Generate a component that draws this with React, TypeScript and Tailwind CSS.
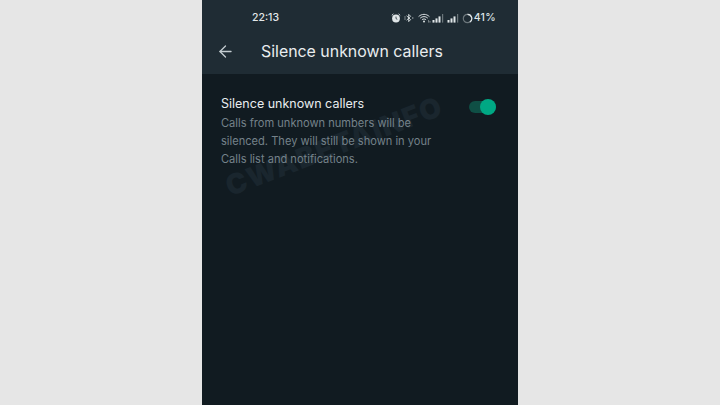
import { ArrowLeft } from "lucide-react";

function SignalBars({ className }: { className: string }) {
  return (
    <svg width="13" height="10" viewBox="0 0 13 10" className={className}>
      <rect x="0.5" y="7" width="2" height="2.6" fill="currentColor" />
      <rect x="3.5" y="5.4" width="2" height="4.2" fill="currentColor" />
      <rect x="6.5" y="3.4" width="2" height="6.2" fill="currentColor" />
      <rect x="10" y="1" width="1.2" height="8.6" fill="currentColor" opacity="0.4" />
    </svg>
  );
}

function StatusIcons() {
  return (
    <div className="flex items-center text-[#dfe5e7]">
      <svg width="10" height="10" viewBox="0 0 10 10" className="mr-[3px]">
        <circle cx="5" cy="5.5" r="3.9" fill="currentColor" />
        <path d="M5 3.6V5.6L6.3 6.3" stroke="#1f2c34" strokeWidth="0.8" fill="none" />
        <path d="M0.8 2.4L2.4 0.9M9.2 2.4L7.6 0.9" stroke="currentColor" strokeWidth="1" />
      </svg>
      <svg width="10" height="10" viewBox="0 0 10 10" className="mr-[4px]">
        <path d="M2.6 2.8L6.6 6.6L4.7 8.6V1.4L6.6 3.3L2.6 7.2" stroke="currentColor" strokeWidth="0.9" fill="none" />
        <path d="M0.4 4H1.6M0.4 6H1.6M8 5H9.4" stroke="currentColor" strokeWidth="0.8" />
      </svg>
      <svg width="13" height="10" viewBox="0 0 13 10">
        <path d="M0.6 3.6C3.6 0.6 8.4 0.6 11.4 3.6M2.2 5.2C4.4 3.1 7.6 3.1 9.8 5.2M3.9 6.8C5.1 5.7 6.9 5.7 8.1 6.8" stroke="currentColor" strokeWidth="0.95" fill="none" />
        <circle cx="6" cy="8.4" r="1" fill="currentColor" />
        <path d="M10.6 7V9.6M12 8V9.6" stroke="currentColor" strokeWidth="0.7" opacity="0.7" />
      </svg>
      <SignalBars className="ml-[1px]" />
      <SignalBars className="ml-[2px]" />
      <svg width="11" height="11" viewBox="0 0 11 11" className="ml-[2px]">
        <circle cx="5.5" cy="5.5" r="4.2" stroke="currentColor" strokeOpacity="0.4" strokeWidth="1.2" fill="none" />
        <path d="M5.5 1.3A4.2 4.2 0 0 1 7.9 9" stroke="currentColor" strokeWidth="1.2" fill="none" />
      </svg>
      <span className="ml-[1px] text-[10.5px] font-medium leading-none tracking-[0.3px]">41%</span>
    </div>
  );
}

export default function App() {
  return (
    <div className="flex h-[405px] w-[720px] justify-center overflow-hidden bg-[#e6e6e6] font-['Inter',sans-serif]">
      <div className="flex w-[316px] flex-col bg-[#111b21]">
        <header className="h-[74px] shrink-0 bg-[#1f2c34]">
          <div className="flex h-[36px] items-center justify-between pl-[50px] pr-[22px]">
            <span className="text-[10.5px] font-medium text-[#e3e8ea]">22:13</span>
            <StatusIcons />
          </div>
          <div className="flex items-center pl-[14px]">
            <ArrowLeft size={19} strokeWidth={1.6} className="text-[#c4cdd1]" />
            <h1 className="ml-[26px] mt-px text-[15.9px] font-normal leading-[30px] text-[#e9edef]">Silence unknown callers</h1>
          </div>
        </header>
        <section className="relative flex justify-between pl-[19px] pr-[22px] pt-[21px]">
          <div className="absolute left-[17px] top-[58px] -rotate-[21deg] whitespace-nowrap text-[28px] font-black leading-none tracking-[1.5px] text-[#1a262e]">
            CWABETAINFO
          </div>
          <div className="relative w-[226px]">
            <div className="text-[12.5px] leading-[18px] text-[#e9edef]">Silence unknown callers</div>
            <p className="mt-px text-[11.1px] leading-[18px] text-[#75828a]">
              Calls from unknown numbers will be silenced. They will still be shown in your Calls list and notifications.
            </p>
          </div>
          <div className="relative mt-[6px] h-[12px] w-[27px] rounded-full bg-[#0f4f45]">
            <div className="absolute -top-[2px] right-0 h-[16px] w-[16px] rounded-full bg-[#00a884]" />
          </div>
        </section>
      </div>
    </div>
  );
}
